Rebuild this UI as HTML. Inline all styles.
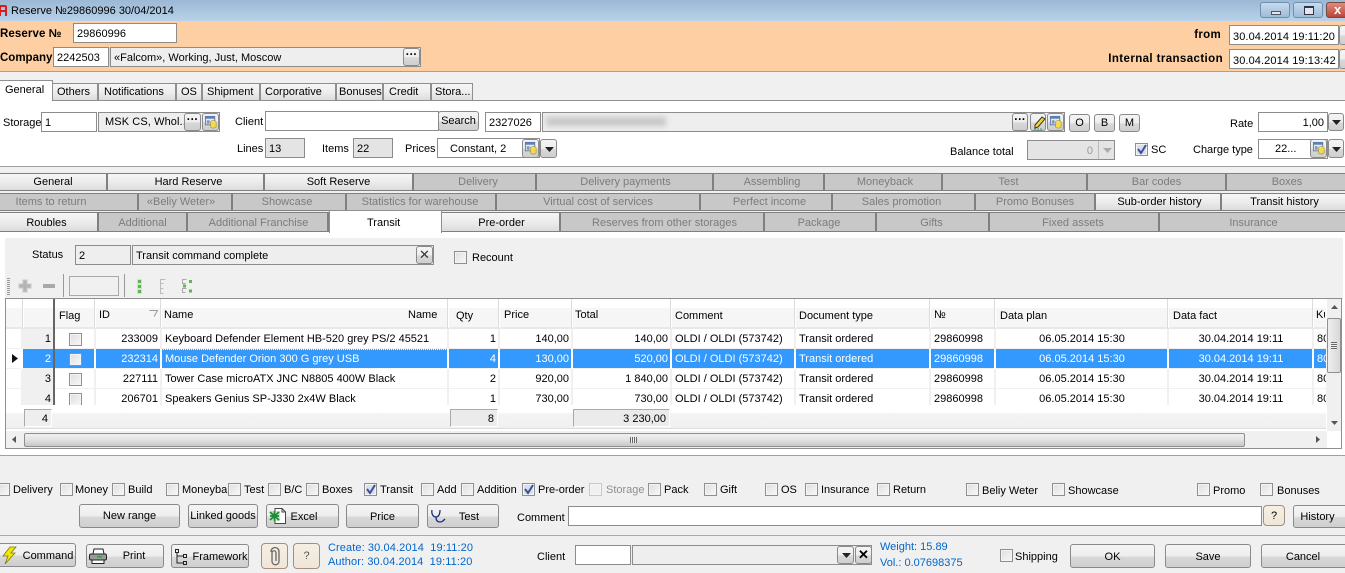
<!DOCTYPE html>
<html><head><meta charset="utf-8"><title>Reserve</title>
<style>
html,body{margin:0;padding:0}
body{width:1345px;height:573px;overflow:hidden;position:relative;background:#f0f0f0;font:11px/16px "Liberation Sans",sans-serif;color:#000}
div,span,svg{position:absolute;box-sizing:border-box}
span{white-space:nowrap;margin-top:1px}
.b{font-weight:bold;font-size:11.500px}
.in{background:#fff;border:1px solid #8c8c8c}
.gy{background:#eee;border:1px solid #8c8c8c}
.ro{background:#e4e4e4;border:1px solid #8c8c8c}
.tx{padding:2px 0 0 3px;white-space:nowrap;overflow:hidden}
.btn{background:linear-gradient(#f4f4f4 0,#eee 50%,#d8d8d8 55%,#cfcfcf 100%);border:1px solid #8a8a8a;border-radius:3px;text-align:center;white-space:nowrap}
.ft{background:linear-gradient(#f5efe4,#efe6d8);border:1px solid #a58f7c;border-radius:4px;text-align:center}
.t1,.t0{text-align:center;border:1px solid #808080;border-left:0;border-right:2px solid #808080;line-height:16px;white-space:nowrap;overflow:hidden}
.t1{background:linear-gradient(#f6f6f6,#ececec 50%,#dcdcdc)}
.t0{background:#c8c8c8;color:#7c7c7c}
.t3{line-height:20px}
.tm{background:linear-gradient(#f6f6f6,#eee 50%,#dcdcdc);border:1px solid #8f8f8f;border-bottom:0;text-align:left;line-height:17px;white-space:nowrap;overflow:hidden}
.cb{width:13px;height:13px;background:linear-gradient(135deg,#dedede,#f8f8f8);border:1px solid #8e8f8f;box-shadow:inset 0 0 0 1px #f4f4f4}
.hs{top:299px;height:29px;background:#dcdcdc;border-right:1px solid #fff;width:2px}
table{position:absolute;border-collapse:collapse;table-layout:fixed;left:0;top:0}
td{height:20px;padding:0 2px 0 3px;border-right:2px solid #f0f0f0;border-bottom:0;box-shadow:inset 0 -1px 0 #f0f0f0;white-space:nowrap;overflow:hidden;background:#fff;line-height:18px}
td.r{text-align:right}
td.c{text-align:center}
td.n{background:#f0f0f0;text-align:right;padding-right:2px}
td.i{background:#fff}
tr.s td{background:#3399ff;color:#fff;border-right-color:#fff}
td .cb{position:relative;display:block;margin:1px 0 0 11px}
</style></head><body>

<svg width="0" height="0" style="left:0;top:0">
<defs>
<symbol id="db" viewBox="0 0 15 15"><rect x="1.500" y="1.500" width="10" height="9" fill="#e4ecf7" stroke="#5a7aa8"/><rect x="1.500" y="1.500" width="10" height="2.500" fill="#5b82bd"/><rect x="3" y="6" width="3" height="1" fill="#446"/><rect x="3" y="8" width="3" height="1" fill="#446"/><ellipse cx="10" cy="7.500" rx="3" ry="1.400" fill="#f8e88a" stroke="#a08a20" stroke-width=".6"/><path d="M7 7.500v5c0 .9 1.300 1.500 3 1.500s3-.6 3-1.500v-5" fill="#f4d84e" stroke="#a08a20" stroke-width=".6"/></symbol>
<symbol id="dn" viewBox="0 0 9 5"><path d="M0 0h9L4.500 5z" fill="#222"/></symbol>
<symbol id="gi" viewBox="0 0 5 5"><rect x="1" y="1" width="3" height="3" fill="#58b84a"/><path d="M.5.5h4v4h-4z" fill="none" stroke="#c3cbc2" stroke-width=".6"/></symbol>
</defs>
</svg>

<!-- Title bar -->
<div style="left:0;top:0;width:1345px;height:21px;background:linear-gradient(#9bb8d4,#b8d2ea)"></div>
<svg style="left:0;top:2px" width="8" height="15" viewBox="0 0 8 15"><path d="M-2 14V3h7q2 0 2 2v9H5v-4H1v4zM1 5v3h4V5z" fill="#d31f1f"/></svg>
<span style="left:11px;top:2px">Reserve №29860996 30/04/2014</span>
<div style="left:1260px;top:2px;width:30px;height:16px;border:1px solid #6f8fae;border-radius:3px;background:linear-gradient(#c6dbee,#9fbbd6)"><div style="left:10px;top:8px;width:10px;height:4px;background:#dfe8f0;border:1px solid #556"></div></div>
<div style="left:1293px;top:2px;width:30px;height:16px;border:1px solid #6f8fae;border-radius:3px;background:linear-gradient(#c6dbee,#9fbbd6)"><div style="left:10px;top:3px;width:10px;height:9px;border:1px solid #334;border-top-width:2px;background:#dfe8f0"></div></div>
<div style="left:1326px;top:2px;width:24px;height:16px;border:1px solid #7a4a40;border-radius:3px;background:linear-gradient(#dc8d7c,#b9473a)"><span style="left:7px;top:-2px;color:#fff;font-weight:bold;font-size:13px">x</span></div>

<!-- Orange header -->
<div style="left:0;top:21px;width:1345px;height:51px;background:#fdcfa2;border-bottom:1px solid #a0a0a0"></div>
<span class="b" style="left:0;top:25px;letter-spacing:.1px">Reserve №</span>
<div class="in tx" style="left:73px;top:23px;width:104px;height:20px">29860996</div>
<span class="b" style="left:0;top:49px">Company</span>
<div class="in tx" style="left:53px;top:47px;width:56px;height:20px">2242503</div>
<div class="gy tx" style="left:110px;top:47px;width:311px;height:20px">«Falcom», Working, Just, Moscow</div>
<div class="btn b" style="left:403px;top:48px;width:17px;height:18px;line-height:12px">···</div>
<span class="b" style="right:124px;top:26px;letter-spacing:.3px">from</span>
<span class="b" style="right:122px;top:50px;letter-spacing:.4px">Internal transaction</span>
<div class="in tx" style="left:1229px;top:25px;width:110px;height:20px;padding-top:3px;letter-spacing:.1px">30.04.2014 19:11:20</div>
<div class="in tx" style="left:1229px;top:49px;width:110px;height:20px;padding-top:3px;letter-spacing:.1px">30.04.2014 19:13:42</div>
<div class="btn" style="left:1339px;top:25px;width:14px;height:20px"></div>
<div class="btn" style="left:1339px;top:49px;width:14px;height:20px"></div>

<!-- Main tabs -->
<div style="left:0;top:100px;width:1345px;height:67px;background:#fff;border-top:1px solid #8f8f8f;border-bottom:1px solid #a0a0a0"></div>
<div class="tm" style="left:0;top:80px;width:53px;height:21px;background:#fff;line-height:18px;border-left:0;padding-left:5px">General</div>
<div class="tm" style="left:52px;top:83px;width:46px;height:17px;padding-left:4px">Others</div>
<div class="tm" style="left:98px;top:83px;width:78px;height:17px;padding-left:5px">Notifications</div>
<div class="tm" style="left:176px;top:83px;width:26px;height:17px;padding-left:4px">OS</div>
<div class="tm" style="left:202px;top:83px;width:58px;height:17px;padding-left:4px">Shipment</div>
<div class="tm" style="left:260px;top:83px;width:76px;height:17px;padding-left:4px">Corporative</div>
<div class="tm" style="left:336px;top:83px;width:47px;height:17px;padding-left:2px">Bonuses</div>
<div class="tm" style="left:383px;top:83px;width:48px;height:17px;padding-left:5px">Credit</div>
<div class="tm" style="left:431px;top:83px;width:42px;height:17px;padding-left:3px">Stora...</div>

<!-- General content -->
<span style="left:3px;top:114px">Storage</span>
<div class="in tx" style="left:41px;top:112px;width:56px;height:20px">1</div>
<div class="gy" style="left:98px;top:112px;width:122px;height:20px"></div>
<span style="left:105px;top:113px;letter-spacing:.1px">MSK CS, Whol...</span>
<div class="btn b" style="left:184px;top:113px;width:17px;height:18px;line-height:12px">···</div>
<div class="btn" style="left:202px;top:113px;width:17px;height:18px"><svg style="left:1px;top:1px" width="14" height="14"><use href="#db"/></svg></div>
<span style="left:235px;top:113px">Client</span>
<div class="in" style="left:265px;top:111px;width:174px;height:20px"></div>
<div class="btn" style="left:438px;top:111px;width:41px;height:20px;line-height:18px">Search</div>
<div class="in tx" style="left:485px;top:112px;width:56px;height:20px">2327026</div>
<div class="gy" style="left:542px;top:112px;width:523px;height:20px"></div>
<div style="left:546px;top:117px;width:120px;height:9px;background:#c6c6c6;filter:blur(3px)"></div>
<div class="btn b" style="left:1012px;top:113px;width:16px;height:18px;line-height:12px">···</div>
<div class="btn" style="left:1030px;top:113px;width:16px;height:18px"><svg style="left:1px;top:1px" width="14" height="15" viewBox="0 0 14 15"><path d="M3 10 10 2l3 2-7 8-3 1z" fill="#f3d43a" stroke="#332"/><path d="M2 14h9" stroke="#2a9a9a" stroke-dasharray="2 1"/></svg></div>
<div class="btn" style="left:1047px;top:113px;width:17px;height:18px"><svg style="left:1px;top:1px" width="14" height="14"><use href="#db"/></svg></div>
<div class="btn" style="left:1069px;top:114px;width:21px;height:18px;line-height:17px">O</div>
<div class="btn" style="left:1094px;top:114px;width:21px;height:18px;line-height:17px">B</div>
<div class="btn" style="left:1119px;top:114px;width:21px;height:18px;line-height:17px">M</div>
<span style="left:1230px;top:115px">Rate</span>
<div class="in" style="left:1258px;top:112px;width:70px;height:20px;text-align:right;padding:2px 3px 0 0">1,00</div>
<div class="btn" style="left:1328px;top:113px;width:16px;height:18px"><svg style="left:3px;top:6px" width="9" height="5"><use href="#dn"/></svg></div>

<span style="left:237px;top:140px">Lines</span>
<div class="ro tx" style="left:265px;top:138px;width:40px;height:20px">13</div>
<span style="left:322px;top:140px">Items</span>
<div class="ro tx" style="left:353px;top:138px;width:40px;height:20px">22</div>
<span style="left:405px;top:140px">Prices</span>
<div class="in" style="left:437px;top:138px;width:103px;height:20px"></div>
<span style="left:450px;top:140px">Constant, 2</span>
<div class="btn" style="left:522px;top:139px;width:17px;height:19px"><svg style="left:1px;top:1px" width="14" height="14"><use href="#db"/></svg></div>
<div class="btn" style="left:540px;top:139px;width:17px;height:19px"><svg style="left:4px;top:7px" width="9" height="5"><use href="#dn"/></svg></div>
<span style="left:950px;top:143px">Balance total</span>
<div class="ro" style="left:1027px;top:140px;width:88px;height:20px;color:#999;text-align:right;padding:2px 21px 0 0">0<div style="left:70px;top:0;width:1px;height:18px;background:#bbb"></div><svg style="left:75px;top:7px" width="9" height="5"><path d="M0 0h9L4.500 5z" fill="#aaa"/></svg></div>
<div class="cb" style="left:1135px;top:143px;background:#d8deea"><svg style="left:1px;top:0" width="10" height="11"><path d="M1 5l3 4 5-8" stroke="#3d4f9c" stroke-width="2" fill="none"/></svg></div>
<span style="left:1151px;top:141px">SC</span>
<span style="left:1193px;top:141px">Charge type</span>
<div class="in" style="left:1258px;top:139px;width:70px;height:20px"></div>
<span style="left:1275px;top:140px">22...</span>
<div class="btn" style="left:1310px;top:139px;width:17px;height:19px"><svg style="left:1px;top:1px" width="14" height="14"><use href="#db"/></svg></div>
<div class="btn" style="left:1328px;top:139px;width:16px;height:19px"><svg style="left:3px;top:7px" width="9" height="5"><use href="#dn"/></svg></div>

<!-- Sub tabs row 1 -->
<div class="t1" style="left:0;top:173px;width:108px;height:18px">General</div>
<div class="t1" style="left:108px;top:173px;width:157px;height:18px;padding-left:6px">Hard Reserve</div>
<div class="t1" style="left:265px;top:173px;width:149px;height:18px;padding-left:0">Soft Reserve</div>
<div class="t0" style="left:414px;top:173px;width:123px;height:18px;padding-left:7px">Delivery</div>
<div class="t0" style="left:537px;top:173px;width:177px;height:18px;padding-left:2px">Delivery payments</div>
<div class="t0" style="left:714px;top:173px;width:111px;height:18px;padding-left:7px">Assembling</div>
<div class="t0" style="left:825px;top:173px;width:118px;height:18px;padding-left:4px">Moneyback</div>
<div class="t0" style="left:943px;top:173px;width:145px;height:18px;padding-right:12px">Test</div>
<div class="t0" style="left:1088px;top:173px;width:139px;height:18px">Bar codes</div>
<div class="t0" style="left:1227px;top:173px;width:118px;height:18px;border-right:0;padding-left:2px">Boxes</div>
<!-- Sub tabs row 2 -->
<div class="t0" style="left:0;top:193px;width:139px;height:18px;padding-right:35px">Items to return</div>
<div class="t0" style="left:139px;top:193px;width:94px;height:18px;padding-right:8px">«Beliy Weter»</div>
<div class="t0" style="left:233px;top:193px;width:114px;height:18px;padding-right:4px">Showcase</div>
<div class="t0" style="left:347px;top:193px;width:150px;height:18px;padding-right:2px">Statistics for warehouse</div>
<div class="t0" style="left:497px;top:193px;width:204px;height:18px">Virtual cost of services</div>
<div class="t0" style="left:701px;top:193px;width:132px;height:18px;padding-left:7px">Perfect income</div>
<div class="t0" style="left:833px;top:193px;width:143px;height:18px;padding-right:4px">Sales promotion</div>
<div class="t0" style="left:976px;top:193px;width:120px;height:18px">Promo Bonuses</div>
<div class="t1" style="left:1096px;top:193px;width:126px;height:18px;padding-left:3px">Sub-order history</div>
<div class="t1" style="left:1222px;top:193px;width:123px;height:18px;border-right:0;padding-left:2px">Transit history</div>
<!-- Sub tabs row 3 -->
<div class="t1 t3" style="left:0;top:212px;width:99px;height:20px;padding-right:4px">Roubles</div>
<div class="t0 t3" style="left:99px;top:212px;width:89px;height:20px">Additional</div>
<div class="t0 t3" style="left:188px;top:212px;width:141px;height:20px;padding-left:2px">Additional Franchise</div>
<div class="t1 t3" style="left:442px;top:212px;width:119px;height:20px;padding-left:2px">Pre-order</div>
<div class="t0 t3" style="left:561px;top:212px;width:204px;height:20px;padding-left:5px">Reserves from other storages</div>
<div class="t0 t3" style="left:765px;top:212px;width:112px;height:20px;padding-right:2px">Package</div>
<div class="t0 t3" style="left:877px;top:212px;width:113px;height:20px;padding-right:2px">Gifts</div>
<div class="t0 t3" style="left:990px;top:212px;width:170px;height:20px;padding-right:2px">Fixed assets</div>
<div class="t0 t3" style="left:1160px;top:212px;width:185px;height:20px;border-right:0;padding-left:2px">Insurance</div>

<!-- White tab page -->
<div style="left:0;top:232px;width:1345px;height:224px;background:#fff;border-bottom:1px solid #a0a0a0"></div>
<div style="left:329px;top:210px;width:113px;height:23px;background:#fff;border:1px solid #8f8f8f;border-bottom:0;padding-left:37px;line-height:24px">Transit</div>
<div style="left:5px;top:238px;width:1338px;height:61px;background:#f0f0f0"></div>

<span style="left:32px;top:246px">Status</span>
<div class="ro tx" style="left:75px;top:245px;width:56px;height:20px;background:#eee">2</div>
<div class="gy tx" style="left:132px;top:245px;width:302px;height:20px">Transit command complete</div>
<div class="btn" style="left:416px;top:246px;width:17px;height:18px;line-height:15px;font-size:13px;color:#333">✕</div>
<div class="cb" style="left:454px;top:251px"></div>
<span style="left:472px;top:249px">Recount</span>

<!-- Toolbar -->
<div style="left:7px;top:278px;width:3px;height:17px;background:repeating-linear-gradient(#999 0 1px,#f0f0f0 1px 2px)"></div>
<svg style="left:18px;top:279px" width="14" height="14" viewBox="0 0 14 14"><path d="M5 1h4v4h4v4H9v4H5V9H1V5h4z" fill="#b4b4b4" stroke="#c8c8c8"/></svg>
<div style="left:43px;top:284px;width:12px;height:4px;background:#a8a8a8"></div>
<div style="left:63px;top:274px;width:1px;height:23px;background:#999"></div>
<div style="left:69px;top:276px;width:50px;height:20px;border:1px solid #a9a9a9;background:#f0f0f0"></div>
<div style="left:124px;top:274px;width:1px;height:23px;background:#999"></div>
<svg style="left:137px;top:279px" width="5" height="5"><use href="#gi"/></svg>
<svg style="left:137px;top:284px" width="5" height="5"><use href="#gi"/></svg>
<svg style="left:137px;top:289px" width="5" height="5"><use href="#gi"/></svg>
<svg style="left:160px;top:279px" width="6" height="15" viewBox="0 0 6 15"><path d="M5.500.5h-5v4h3M.5 4.500v5h3M.5 9.500v5h3" stroke="#bbb" fill="none"/></svg>
<svg style="left:182px;top:279px" width="11" height="15" viewBox="0 0 11 15"><path d="M4.500.5h-4v4h3M4.500 9.500h-4v4h3" stroke="#aaa" fill="none"/><rect x="7" y="1" width="3" height="3" fill="#58b84a"/><rect x="1" y="5.500" width="3" height="3" fill="#58b84a"/><rect x="7" y="10.500" width="3" height="3" fill="#58b84a"/></svg>

<!-- Grid -->
<div style="left:5px;top:298px;width:1337px;height:151px;border:1px solid #8f8f8f;background:#fff"></div>
<div style="left:6px;top:308px;width:1320px;height:19px;background:#f6f6f6"></div>
<div style="left:6px;top:327px;width:1320px;height:2px;background:#e8e8e8"></div>
<div class="hs" style="left:22px"></div><div class="hs" style="left:94px"></div><div class="hs" style="left:160px"></div><div class="hs" style="left:447px"></div><div class="hs" style="left:498px"></div><div class="hs" style="left:571px"></div><div class="hs" style="left:670px"></div><div class="hs" style="left:794px"></div><div class="hs" style="left:929px"></div><div class="hs" style="left:994px"></div><div class="hs" style="left:1167px"></div><div class="hs" style="left:1312px"></div>
<span style="left:59px;top:307px">Flag</span>
<span style="left:99px;top:306px">ID</span>
<svg style="left:149px;top:310px" width="9" height="7"><path d="M.5.5h8L5 6.500" fill="none" stroke="#999"/></svg>
<span style="left:164px;top:306px">Name</span>
<span style="left:408px;top:306px">Name</span>
<span style="left:456px;top:307px">Qty</span>
<span style="left:504px;top:306px">Price</span>
<span style="left:575px;top:306px">Total</span>
<span style="left:675px;top:307px">Comment</span>
<span style="left:799px;top:307px">Document type</span>
<span style="left:934px;top:306px">№</span>
<span style="left:1000px;top:307px">Data plan</span>
<span style="left:1173px;top:307px">Data fact</span>
<span style="left:1316px;top:306px;width:9px;overflow:hidden">Ku</span>

<div style="left:6px;top:329px;width:1321px;height:76px;overflow:hidden;background:#fff">
<table style="width:1321px">
<colgroup><col style="width:16px"><col style="width:32px"><col style="width:41px"><col style="width:66px"><col style="width:287px"><col style="width:51px"><col style="width:73px"><col style="width:99px"><col style="width:124px"><col style="width:135px"><col style="width:65px"><col style="width:173px"><col style="width:145px"><col style="width:14px"></colgroup>
<tr><td class="i"></td><td class="n">1</td><td><div class="cb"></div></td><td class="r">233009</td><td>Keyboard Defender Element HB-520 grey PS/2 45521</td><td class="r">1</td><td class="r">140,00</td><td class="r">140,00</td><td>OLDI / OLDI (573742)</td><td>Transit ordered</td><td>29860998</td><td class="c">06.05.2014 15:30</td><td class="c">30.04.2014 19:11</td><td>80</td></tr>
<tr class="s"><td class="i" style="background:#fff"></td><td class="n">2</td><td><div class="cb"></div></td><td class="r">232314</td><td style="outline:1px dotted #fff;outline-offset:-1px">Mouse Defender Orion 300 G grey USB</td><td class="r">4</td><td class="r">130,00</td><td class="r">520,00</td><td>OLDI / OLDI (573742)</td><td>Transit ordered</td><td>29860998</td><td class="c">06.05.2014 15:30</td><td class="c">30.04.2014 19:11</td><td>80</td></tr>
<tr><td class="i"></td><td class="n">3</td><td><div class="cb"></div></td><td class="r">227111</td><td>Tower Case microATX JNC N8805 400W Black</td><td class="r">2</td><td class="r">920,00</td><td class="r">1 840,00</td><td>OLDI / OLDI (573742)</td><td>Transit ordered</td><td>29860998</td><td class="c">06.05.2014 15:30</td><td class="c">30.04.2014 19:11</td><td>80</td></tr>
<tr><td class="i"></td><td class="n">4</td><td><div class="cb"></div></td><td class="r">206701</td><td>Speakers Genius SP-J330 2x4W Black</td><td class="r">1</td><td class="r">730,00</td><td class="r">730,00</td><td>OLDI / OLDI (573742)</td><td>Transit ordered</td><td>29860998</td><td class="c">06.05.2014 15:30</td><td class="c">30.04.2014 19:11</td><td>80</td></tr>
</table>
</div>
<div style="left:53px;top:299px;width:2px;height:106px;background:#666"></div>
<svg style="left:12px;top:354px" width="6" height="9"><path d="M0 0l6 4.500L0 9z" fill="#111"/></svg>

<!-- Footer -->
<div style="left:6px;top:405px;width:1320px;height:24px;background:linear-gradient(#fff 0,#fff 30%,#f3f3f3 40%,#f0f0f0);border-bottom:1px solid #ddd"></div>
<div class="gy" style="left:24px;top:409px;width:28px;height:18px;text-align:right;padding:1px 3px 0 0;border-color:#aaa #fff #fff #aaa">4</div>
<div class="gy" style="left:450px;top:409px;width:48px;height:18px;text-align:right;padding:1px 3px 0 0;border-color:#aaa #fff #fff #aaa;background:#ebebeb">8</div>
<div class="gy" style="left:573px;top:409px;width:97px;height:18px;text-align:right;padding:1px 3px 0 0;border-color:#aaa #fff #fff #aaa;background:#ebebeb">3 230,00</div>

<!-- Scrollbars -->
<div style="left:1327px;top:299px;width:14px;height:132px;background:#f0f0f0"></div>
<svg style="left:1331px;top:305px" width="7" height="4"><path d="M0 4h7L3.500 0z" fill="#555"/></svg>
<div style="left:1327px;top:318px;width:14px;height:55px;background:linear-gradient(90deg,#eee,#d8d8d8);border:1px solid #8f8f8f;border-radius:2px"></div>
<div style="left:1331px;top:342px;width:6px;height:7px;background:repeating-linear-gradient(#666 0 1px,#eee 1px 2px)"></div>
<svg style="left:1331px;top:421px" width="7" height="4"><path d="M0 0h7L3.500 4z" fill="#555"/></svg>
<div style="left:6px;top:431px;width:1321px;height:17px;background:#f0f0f0"></div>
<svg style="left:12px;top:436px" width="4" height="7"><path d="M4 0v7L0 3.500z" fill="#555"/></svg>
<div style="left:24px;top:433px;width:1221px;height:14px;background:linear-gradient(#f0f0f0,#e4e4e4 45%,#c8c8c8);border:1px solid #8f8f8f;border-radius:2px"></div>
<div style="left:630px;top:437px;width:7px;height:6px;background:repeating-linear-gradient(90deg,#666 0 1px,#eee 1px 2px)"></div>
<svg style="left:1316px;top:436px" width="4" height="7"><path d="M0 0v7l4-3.500z" fill="#555"/></svg>

<!-- Checkbox row -->
<div class="cb" style="left:-3px;top:483px"></div><span style="left:13px;top:481px">Delivery</span>
<div class="cb" style="left:60px;top:483px"></div><span style="left:75px;top:481px">Money</span>
<div class="cb" style="left:112px;top:483px"></div><span style="left:128px;top:481px">Build</span>
<div class="cb" style="left:166px;top:483px"></div><span style="left:182px;top:481px">Moneyba</span>
<div class="cb" style="left:228px;top:483px"></div><span style="left:244px;top:481px">Test</span>
<div class="cb" style="left:268px;top:483px"></div><span style="left:284px;top:481px">B/C</span>
<div class="cb" style="left:306px;top:483px"></div><span style="left:322px;top:481px">Boxes</span>
<div class="cb" style="left:364px;top:483px;background:#d8deea"><svg style="left:1px;top:0" width="10" height="11"><path d="M1 5l3 4 5-8" stroke="#3d4f9c" stroke-width="2" fill="none"/></svg></div><span style="left:380px;top:481px">Transit</span>
<div class="cb" style="left:421px;top:483px"></div><span style="left:437px;top:481px">Add</span>
<div class="cb" style="left:461px;top:483px"></div><span style="left:477px;top:481px">Addition</span>
<div class="cb" style="left:522px;top:483px;background:#d8deea"><svg style="left:1px;top:0" width="10" height="11"><path d="M1 5l3 4 5-8" stroke="#3d4f9c" stroke-width="2" fill="none"/></svg></div><span style="left:538px;top:481px">Pre-order</span>
<div class="cb" style="left:589px;top:483px;border-color:#c8c8c8;background:#f0f0f0"></div><span style="left:606px;top:481px;color:#8f8f8f">Storage</span>
<div class="cb" style="left:648px;top:483px"></div><span style="left:664px;top:481px">Pack</span>
<div class="cb" style="left:704px;top:483px"></div><span style="left:720px;top:481px">Gift</span>
<div class="cb" style="left:765px;top:483px"></div><span style="left:781px;top:481px">OS</span>
<div class="cb" style="left:805px;top:483px"></div><span style="left:821px;top:481px">Insurance</span>
<div class="cb" style="left:877px;top:483px"></div><span style="left:893px;top:481px">Return</span>
<div class="cb" style="left:966px;top:483px"></div><span style="left:982px;top:482px">Beliy Weter</span>
<div class="cb" style="left:1052px;top:483px"></div><span style="left:1068px;top:482px">Showcase</span>
<div class="cb" style="left:1197px;top:483px"></div><span style="left:1213px;top:482px">Promo</span>
<div class="cb" style="left:1260px;top:483px"></div><span style="left:1277px;top:482px">Bonuses</span>

<!-- Button row -->
<div class="btn" style="left:79px;top:504px;width:101px;height:24px;line-height:22px">New range</div>
<div class="btn" style="left:188px;top:504px;width:70px;height:24px;line-height:22px">Linked goods</div>
<div class="btn" style="left:266px;top:504px;width:73px;height:24px;line-height:24px;padding-left:3px">Excel
<svg style="left:2px;top:2px" width="18" height="18" viewBox="0 0 18 18"><path d="M6 1.500h7l3.500 3.500v11.500H6z" fill="#fff" stroke="#444"/><path d="M13 1.500V5h3.500" fill="none" stroke="#444"/><path d="M1 4h10v10H1z" fill="#cde6c8"/><path d="M1 5l9 8M10 5l-9 8M1 9h9M5.500 4v10" stroke="#1f8a3a" stroke-width="1.800"/></svg></div>
<div class="btn" style="left:346px;top:504px;width:73px;height:24px;line-height:24px">Price</div>
<div class="btn" style="left:427px;top:504px;width:72px;height:24px;line-height:24px;padding-left:12px">Test
<svg style="left:3px;top:4px" width="16" height="15" viewBox="0 0 16 15"><path d="M1 1c-1 5 2 7 4 7s4-2 4-7M5 8c0 4 2 5 4 5s3-1 5-3" fill="none" stroke="#1a2a7a" stroke-width="1.300"/></svg></div>
<span style="left:517px;top:509px">Comment</span>
<div class="in" style="left:568px;top:506px;width:694px;height:20px"></div>
<div class="ft" style="left:1263px;top:505px;width:22px;height:21px;line-height:20px">?</div>
<div class="btn" style="left:1293px;top:505px;width:56px;height:23px;line-height:22px;padding-right:7px">History</div>

<div style="left:0;top:535px;width:1345px;height:1px;background:#aaa"></div>

<!-- Bottom row -->
<div class="btn" style="left:-2px;top:543px;width:78px;height:24px;line-height:24px;padding-left:22px">Command
<svg style="left:3px;top:2px" width="15" height="19" viewBox="0 0 15 19"><path d="M8 1h6L9 7h4L3 18l3-8H1z" fill="#f5e600" stroke="#7a7a10" stroke-width=".8"/></svg></div>
<div class="btn" style="left:86px;top:544px;width:78px;height:24px;line-height:22px;padding-left:18px">Print
<svg style="left:2px;top:2px" width="18" height="18" viewBox="0 0 18 18"><path d="M5 2h9l1 5H4z" fill="#fff" stroke="#222"/><rect x=".5" y="7" width="17" height="6" rx="1.500" fill="#999" stroke="#222"/><rect x="3" y="13" width="12" height="3.500" fill="#fff" stroke="#222"/><rect x="8" y="9" width="5" height="1.500" fill="#2a2"/></svg></div>
<div class="btn" style="left:171px;top:544px;width:78px;height:24px;line-height:24px;padding-left:20px">Framework
<svg style="left:2px;top:3px" width="14" height="18" viewBox="0 0 14 18"><path d="M1.500 1.500h3v3h-3zM9.500 6.500h3v3h-3zM9.500 13.500h3v3h-3zM3 4.500V15h6M3 8h6" fill="none" stroke="#222"/></svg></div>
<div class="ft" style="left:261px;top:543px;width:27px;height:26px"><svg style="left:6px;top:2px" width="14" height="21" viewBox="0 0 14 21"><path d="M3 6c0-6 8-6 8 0v9c0 5-7 5-7 0V7c0-3 4-3 4 0v8" fill="none" stroke="#666" stroke-width="1.300"/></svg></div>
<div class="ft" style="left:293px;top:543px;width:27px;height:26px;line-height:25px;color:#554">?</div>
<span style="left:328px;top:539px;color:#0066cc;letter-spacing:.1px">Create: 30.04.2014&nbsp; 19:11:20</span>
<span style="left:328px;top:553px;color:#0066cc;letter-spacing:.1px">Author: 30.04.2014&nbsp; 19:11:20</span>
<span style="left:537px;top:548px">Client</span>
<div class="in" style="left:575px;top:545px;width:56px;height:20px"></div>
<div class="gy" style="left:632px;top:545px;width:240px;height:20px"></div>
<div class="btn" style="left:837px;top:546px;width:17px;height:18px"><svg style="left:4px;top:6px" width="9" height="5"><use href="#dn"/></svg></div>
<div class="btn" style="left:855px;top:546px;width:17px;height:18px;line-height:15px;font-weight:bold;font-size:13px">✕</div>
<span style="left:880px;top:538px;color:#0066cc">Weight: 15.89</span>
<span style="left:880px;top:554px;color:#0066cc">Vol.: 0.07698375</span>
<div class="cb" style="left:1000px;top:549px"></div>
<span style="left:1015px;top:548px">Shipping</span>
<div class="btn" style="left:1070px;top:544px;width:85px;height:24px;line-height:24px">OK</div>
<div class="btn" style="left:1165px;top:544px;width:86px;height:24px;line-height:24px">Save</div>
<div class="btn" style="left:1261px;top:544px;width:90px;height:24px;line-height:24px;padding-right:6px">Cancel</div>
</body></html>
